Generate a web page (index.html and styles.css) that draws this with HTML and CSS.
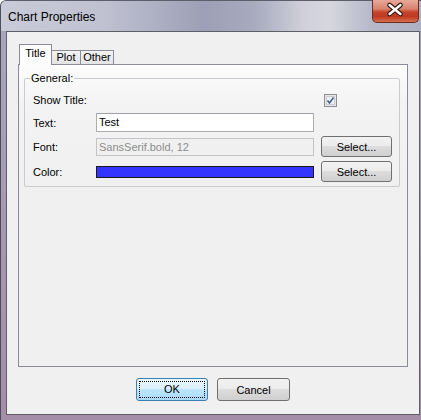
FILE: index.html
```html
<!DOCTYPE html>
<html lang="en">
<head>
  <meta charset="UTF-8">
  <title>Chart Properties</title>
  <link rel="stylesheet" href="styles.css">
</head>
<body>
  <!-- 다이얼로그 창 -->
  <div class="window">
    <div class="titlebar">
      <span class="caption">Chart Properties</span>
      <button class="close">
        <svg width="47" height="22" viewBox="0 0 47 22">
          <path d="M18 5 L29 14 M29 5 L18 14" stroke="#3a1a14" stroke-width="5" stroke-linecap="round"/>
          <path d="M18 5 L29 14 M29 5 L18 14" stroke="#fff" stroke-width="2.6" stroke-linecap="round"/>
        </svg>
      </button>
    </div>

    <div class="client">
      <!-- 탭 -->
      <ul class="tabs">
        <li class="tab on">Title</li>
        <li class="tab plot">Plot</li>
        <li class="tab other">Other</li>
      </ul>

      <div class="panel">
        <fieldset class="group">
          <legend>General:</legend>
          <div class="rows">
            <span class="lbl">Show Title:</span>
            <span></span>
            <span class="chk">
              <svg width="13" height="13" viewBox="0 0 13 13">
                <rect x="0.5" y="0.5" width="12" height="12" fill="#e6e6e6" stroke="#8e8f8f"/>
                <rect x="2.5" y="2.5" width="8" height="8" fill="#eef0f4" stroke="#c9ccd3"/>
                <path d="M3.5 6.5 L5.5 9 L9.5 3.5" fill="none" stroke="#4a5d8c" stroke-width="1.6"/>
              </svg>
            </span>

            <span class="lbl">Text:</span>
            <span class="field">Test</span>
            <span></span>

            <span class="lbl">Font:</span>
            <span class="field off">SansSerif.bold, 12</span>
            <button class="btn">Select...</button>

            <span class="lbl">Color:</span>
            <span class="swatch"></span>
            <button class="btn">Select...</button>
          </div>
        </fieldset>
      </div>

      <!-- 하단 버튼 -->
      <div class="actions">
        <button class="btn big ok"><span>OK</span></button>
        <button class="btn big">Cancel</button>
      </div>
    </div>
  </div>
</body>
</html>
```

FILE: styles.css
```css
html, body{
  margin: 0;
  padding: 0;
}

body{
  width: 421px;
  height: 420px;
  overflow: hidden;
  font-family: "Liberation Sans", Arial, sans-serif;
  font-size: 11px;
  color: #000;
}

ul{
  margin: 0;
  padding: 0;
  list-style: none;
}

/* 창 프레임 */
.window{
  height: 420px;
  box-sizing: border-box;
  border-left: 1px solid #4b4d5c;
  border-top: 1px solid #5c5e6c;
  border-top-left-radius: 6px;
  background: linear-gradient(to bottom, #a9a8bb, #a694ab 70%, #a58ea8);
  display: flex;
  flex-direction: column;
}

.titlebar{
  height: 30px;
  display: flex;
  align-items: center;
  padding-left: 7px;
  background: linear-gradient(to right, #c9cbd8 0%, #bfc1d1 25%, #9d9fb6 48%, #a7a9bd 60%, #cfd0da 72%, #d6d7df 78%, #b7b9ca 88%, #aeb0c3 100%);
  border-top-left-radius: 5px;
}

.caption{
  font-size: 12px;
  color: #000;
  padding-top: 1px;
}

/* 닫기버튼 */
.close{
  margin-left: auto;
  margin-right: 2px;
  align-self: flex-start;
  margin-top: -1px;
  width: 47px;
  height: 23px;
  padding: 0;
  border: 1px solid #6f2b22;
  border-top: none;
  border-radius: 0 0 5px 5px;
  background: linear-gradient(to bottom, #e7a899 0%, #d98470 40%, #c5432a 55%, #c03a22 75%, #d2704f 100%);
  display: flex;
}

.close svg{
  margin-left: -1px;
}

/* 본문 영역 */
.client{
  flex: 1;
  margin: 0 1px 5px 5px;
  border: 1px solid #5e5e66;
  background-color: #f0f0f0;
  padding: 12px 11px 13px 11px;
  display: flex;
  flex-direction: column;
}

/* 탭 */
.tabs{
  height: 20px;
  display: flex;
  align-items: flex-end;
  padding-left: 1px;
}

.tab{
  box-sizing: border-box;
  height: 14px;
  line-height: 12px;
  text-align: center;
  border: 1px solid #898c95;
  border-bottom: none;
  background: linear-gradient(to bottom, #f3f3f3, #e4e4e4);
}

.tab.on{
  position: relative;
  z-index: 1;
  width: 33px;
  height: 21px;
  line-height: 17px;
  margin-bottom: -1px;
  background-color: #fcfcfc;
  background-image: none;
}

.tab.plot{
  width: 29px;
  border-left: none;
}

.tab.other{
  width: 33px;
  border-left: none;
}

.panel{
  height: 303px;
  box-sizing: border-box;
  border: 1px solid #898c95;
  background: linear-gradient(to bottom, #fcfcfc, #f3f3f3 40px, #f0f0f0 120px);
  padding: 7px 7px 0 5px;
}

/* 그룹박스 */
.group{
  margin: 0;
  padding: 6px 7px 4px 8px;
  border: 1px solid #c8cbcf;
  border-radius: 2px;
}

.group legend{
  padding: 0 1px;
  margin-left: -3px;
  line-height: 13px;
}

.rows{
  display: grid;
  grid-template-columns: 56px 218px 71px;
  grid-template-rows: 18px 19px 21px 21px;
  column-gap: 7px;
  row-gap: 4px;
  align-items: center;
}

.chk{
  display: flex;
  padding-left: 3px;
  margin-top: 0;
}

.field{
  box-sizing: border-box;
  height: 19px;
  line-height: 17px;
  padding-left: 2px;
  border: 1px solid #abadb3;
  border-top-color: #9ea1a8;
  background-color: #fff;
}

.field.off{
  height: 18px;
  line-height: 16px;
  color: #8d8d8d;
  background-color: #f0f0f0;
  border-color: #c2c4c8;
}

.swatch{
  box-sizing: border-box;
  height: 12px;
  border: 1px solid #1a1a1a;
  background-color: #3434ff;
}

/* 버튼 */
.btn{
  box-sizing: border-box;
  height: 21px;
  padding: 0;
  font-family: inherit;
  font-size: 11px;
  color: #000;
  border: 1px solid #707070;
  border-radius: 3px;
  background: linear-gradient(to bottom, #f2f2f2 0%, #ebebeb 49%, #dddddd 50%, #cfcfcf 100%);
}

.actions{
  margin-top: 11px;
  display: flex;
  justify-content: center;
  gap: 9px;
}

.btn.big{
  width: 73px;
  height: 23px;
}

.btn.ok{
  width: 72px;
  border-color: #3c7fb1;
  background: linear-gradient(to bottom, #eaf6fd 0%, #d9f0fc 49%, #bee6fd 50%, #a7d9f5 100%);
  padding: 2px;
}

.btn.ok span{
  display: block;
  height: 100%;
  box-sizing: border-box;
  border: 1px dotted #000;
  line-height: 15px;
}
```
